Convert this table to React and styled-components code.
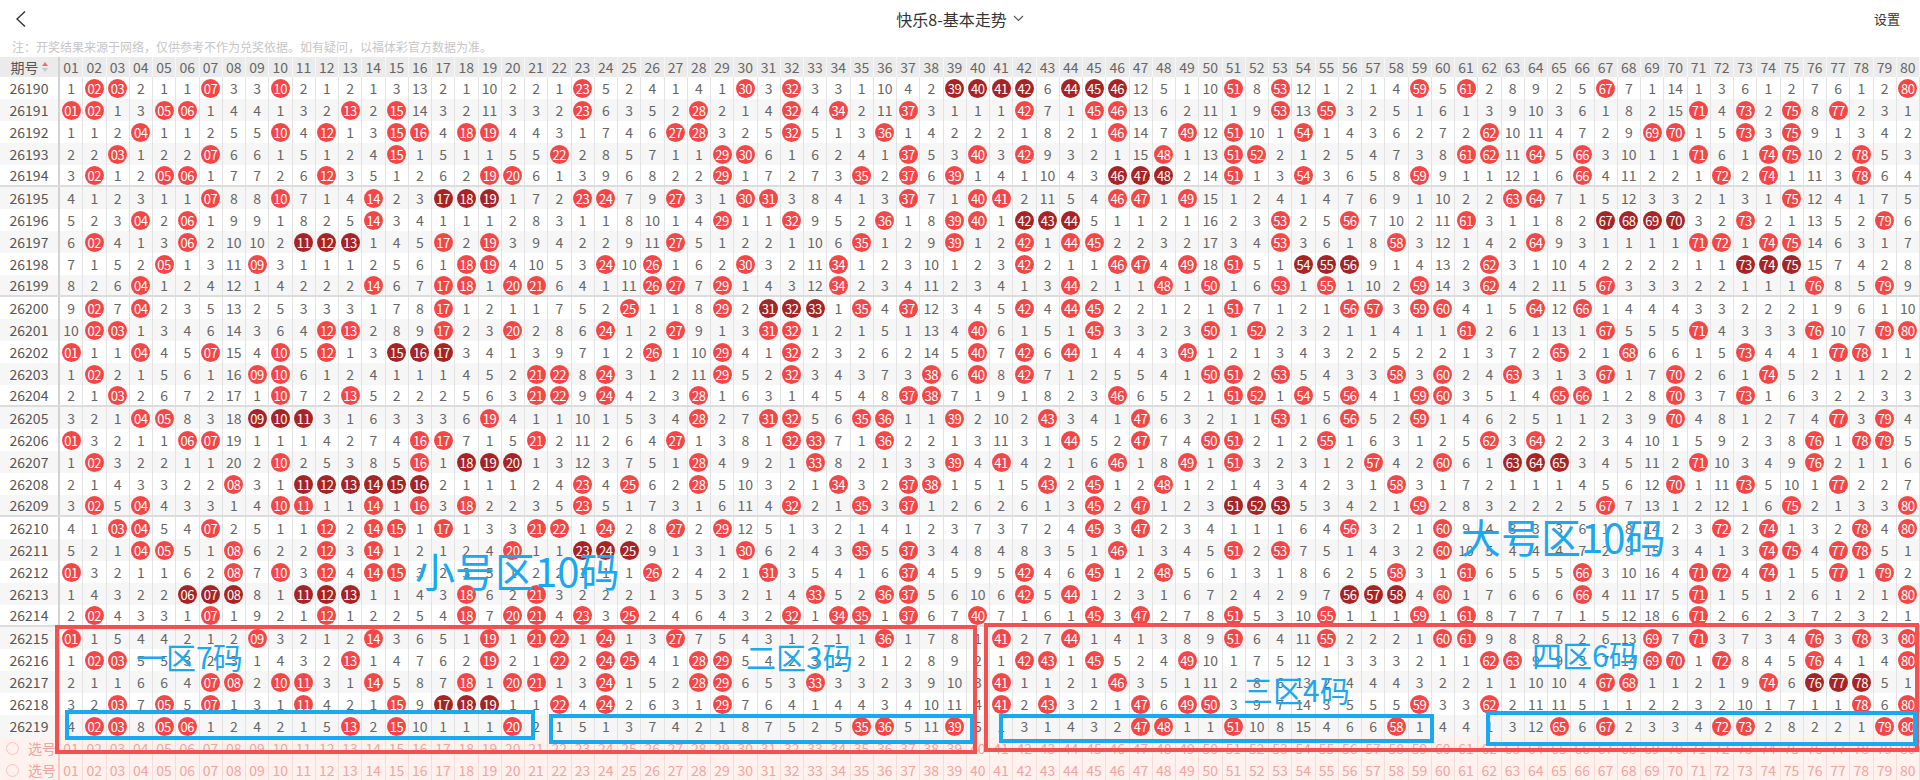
import React from "react";
import styled, { createGlobalStyle } from "styled-components";

const GlobalStyle = createGlobalStyle`
  html, body {
    margin: 0;
    padding: 0;
    background: #fff;
    overflow: hidden;
  }
  body {
    font-family: "Noto Sans CJK SC", "Noto Sans", sans-serif;
  }
`;

// omission shown in the first period for every number not drawn
const START = [
  1, 0, 0, 2, 1, 1, 0, 3, 3, 0,
  2, 1, 2, 1, 3, 13, 2, 1, 10, 2,
  2, 1, 0, 5, 2, 4, 1, 4, 1, 0,
  3, 0, 3, 3, 1, 10, 4, 2, 0, 0,
  0, 0, 6, 0, 0, 0, 12, 5, 1, 10,
  0, 8, 0, 12, 1, 2, 1, 4, 0, 5,
  0, 2, 8, 9, 2, 5, 0, 7, 1, 14,
  1, 3, 6, 1, 2, 7, 6, 1, 2, 0,
];

const DRAWS = [
  [2, 3, 7, 10, 23, 30, 32, 39, 40, 41, 42, 44, 45, 46, 51, 53, 59, 61, 67, 80],
  [1, 2, 5, 6, 13, 15, 23, 28, 32, 34, 37, 42, 45, 46, 53, 55, 71, 73, 75, 77],
  [4, 10, 12, 15, 16, 18, 19, 27, 28, 32, 36, 46, 49, 51, 54, 62, 69, 70, 73, 75],
  [3, 7, 15, 22, 29, 30, 37, 40, 42, 48, 51, 52, 61, 62, 64, 66, 71, 74, 75, 78],
  [2, 5, 6, 12, 19, 20, 29, 35, 37, 39, 46, 47, 48, 51, 54, 59, 66, 72, 74, 78],
  [7, 10, 14, 17, 18, 19, 23, 24, 27, 30, 31, 37, 40, 41, 46, 47, 49, 63, 64, 75],
  [4, 6, 14, 29, 32, 36, 39, 40, 42, 43, 44, 53, 56, 61, 67, 68, 69, 70, 73, 79],
  [2, 6, 11, 12, 13, 17, 19, 27, 35, 39, 42, 44, 45, 53, 58, 64, 71, 72, 74, 75],
  [5, 9, 18, 19, 24, 26, 30, 34, 42, 46, 47, 49, 51, 54, 55, 56, 62, 73, 74, 75],
  [4, 14, 17, 18, 20, 21, 26, 27, 29, 34, 44, 48, 50, 53, 55, 59, 62, 67, 76, 79],
  [2, 4, 17, 25, 29, 31, 32, 33, 35, 37, 42, 44, 45, 51, 56, 57, 59, 60, 64, 66],
  [2, 3, 12, 13, 17, 20, 24, 27, 31, 32, 40, 45, 50, 52, 61, 67, 71, 76, 79, 80],
  [1, 4, 7, 10, 12, 15, 16, 17, 26, 29, 32, 40, 42, 44, 49, 65, 68, 73, 77, 78],
  [2, 9, 10, 21, 22, 24, 29, 32, 38, 40, 42, 50, 51, 53, 58, 60, 63, 67, 70, 74],
  [3, 10, 13, 21, 22, 24, 28, 37, 38, 46, 51, 52, 54, 56, 59, 60, 65, 66, 70, 73],
  [4, 5, 9, 10, 11, 19, 28, 31, 32, 35, 36, 39, 43, 47, 53, 56, 59, 70, 77, 79],
  [1, 6, 7, 16, 17, 21, 27, 32, 33, 36, 44, 47, 50, 51, 55, 62, 64, 76, 78, 79],
  [2, 10, 16, 18, 19, 20, 28, 33, 39, 41, 46, 49, 51, 57, 60, 63, 64, 65, 71, 76],
  [8, 11, 12, 13, 14, 15, 16, 23, 25, 28, 34, 37, 38, 43, 45, 48, 58, 70, 73, 77],
  [2, 4, 10, 11, 14, 16, 18, 23, 32, 35, 37, 45, 47, 51, 52, 53, 59, 67, 75, 80],
  [3, 4, 7, 12, 14, 15, 17, 21, 22, 24, 27, 29, 45, 47, 56, 60, 72, 74, 78, 80],
  [4, 5, 8, 12, 14, 20, 23, 24, 25, 30, 35, 37, 46, 51, 53, 60, 74, 75, 77, 78],
  [1, 8, 10, 12, 14, 15, 26, 31, 37, 42, 45, 48, 58, 61, 66, 71, 72, 74, 77, 79],
  [6, 7, 8, 11, 12, 13, 18, 21, 33, 36, 37, 42, 44, 56, 57, 58, 60, 66, 71, 80],
  [2, 7, 12, 18, 20, 21, 23, 25, 32, 34, 35, 37, 40, 45, 47, 51, 55, 59, 61, 71],
  [1, 9, 14, 19, 21, 22, 24, 27, 36, 41, 44, 51, 55, 60, 61, 69, 71, 76, 78, 80],
  [2, 3, 13, 19, 22, 24, 25, 28, 29, 42, 43, 45, 49, 62, 63, 69, 70, 72, 76, 80],
  [7, 8, 10, 11, 14, 18, 20, 21, 24, 28, 29, 33, 41, 46, 67, 68, 74, 76, 77, 78],
  [3, 5, 7, 11, 15, 17, 18, 19, 22, 24, 29, 41, 43, 47, 49, 50, 59, 62, 78, 80],
  [2, 3, 5, 6, 13, 15, 20, 35, 36, 39, 47, 48, 51, 58, 65, 67, 72, 73, 79, 80],
];

const NUMS = Array.from({ length: 80 }, (_, i) => i + 1);
const pad = (n) => String(n).padStart(2, "0");

// runs of 3+ consecutive numbers get the dark ball
const darkSet = (draw) => {
  const set = new Set(draw);
  const dark = new Set();
  draw.forEach((n) => {
    if (set.has(n - 1)) return;
    let end = n;
    while (set.has(end + 1)) end++;
    if (end - n >= 2) for (let k = n; k <= end; k++) dark.add(k);
  });
  return dark;
};

const buildRows = () => {
  const omit = START.map((v) => v - 1);
  return DRAWS.map((draw, i) => {
    const hits = new Set(draw);
    const dark = darkSet(draw);
    const cells = NUMS.map((n) => {
      if (hits.has(n)) {
        omit[n - 1] = 0;
        return { n, hit: true, dark: dark.has(n) };
      }
      omit[n - 1] += 1;
      return { n, hit: false, value: omit[n - 1] };
    });
    return { period: 26190 + i, cells };
  });
};

const ROWS = buildRows();

const GRID = "60px repeat(80, 23.25px)";

const Page = styled.div`
  position: relative;
  width: 1920px;
  height: 780px;
  overflow: hidden;
  color: #333;
`;

const TopBar = styled.div`
  height: 37px;
  display: grid;
  grid-template-columns: 1fr auto 1fr;
  align-items: center;
`;

const Back = styled.div`
  padding-left: 14px;
  display: flex;
  align-items: center;
  svg {
    width: 14px;
    height: 18px;
  }
`;

const Title = styled.div`
  display: flex;
  align-items: center;
  gap: 6px;
  font-size: 16px;
  color: #333;
  svg {
    width: 11px;
    height: 7px;
  }
`;

const Settings = styled.div`
  justify-self: end;
  padding-right: 20px;
  font-size: 13px;
  color: #333;
`;

const Note = styled.div`
  height: 20px;
  line-height: 20px;
  padding-left: 12px;
  font-size: 12px;
  color: #c6c6c6;
`;

const Row = styled.div`
  display: grid;
  grid-template-columns: ${GRID};
  height: 22px;
  box-sizing: border-box;
  background: ${(p) => p.$bg};
  border-bottom: ${(p) => (p.$split ? "2px solid #dcdcdc" : "none")};
`;

const HeaderRow = styled(Row)`
  height: 20px;
  background: #ebebeb;
`;

const Cell = styled.div`
  display: flex;
  align-items: center;
  justify-content: center;
  font-size: 14px;
  color: #666;
  border-right: 1px solid #e3e3e3;
  line-height: 1;
  white-space: nowrap;
`;

const HeadCell = styled(Cell)`
  border-right-color: #f6f6f6;
  color: #666;
`;

const PeriodCell = styled(Cell)`
  border-right: 2px solid #d2d2d2;
  color: #555;
`;

const SortIcon = styled.span`
  display: inline-flex;
  flex-direction: column;
  gap: 2px;
  margin-left: 3px;
  &::before,
  &::after {
    content: "";
    border-left: 3px solid transparent;
    border-right: 3px solid transparent;
  }
  &::before {
    border-bottom: 4px solid #f26b6b;
  }
  &::after {
    border-top: 4px solid #c8c8c8;
  }
`;

const Ball = styled.span`
  width: 19px;
  height: 19px;
  border-radius: 50%;
  background: ${(p) => (p.$dark ? "#a82424" : "#f54646")};
  color: #fff;
  font-size: 13px;
  display: flex;
  align-items: center;
  justify-content: center;
  letter-spacing: -0.3px;
`;

const PickRow = styled(Row)`
  background: #fff1ee;
`;

const PickCell = styled(Cell)`
  color: #f6a29d;
  border-right-color: #f6dcd8;
`;

const PickLabel = styled(PickCell)`
  justify-content: flex-start;
  gap: 9px;
  padding-left: 6px;
  border-right: 2px solid #f0cfcb;
`;

const Ring = styled.span`
  width: 13px;
  height: 13px;
  border-radius: 50%;
  border: 1px solid #f8c2bd;
  box-sizing: border-box;
`;

const Frame = styled.div`
  position: absolute;
  left: ${(p) => p.$x}px;
  top: ${(p) => p.$y}px;
  width: ${(p) => p.$w}px;
  height: ${(p) => p.$h}px;
  box-sizing: border-box;
  border: 4px solid ${(p) => p.$color};
  pointer-events: none;
`;

const Label = styled.div`
  position: absolute;
  left: ${(p) => p.$x}px;
  top: ${(p) => p.$y}px;
  font-size: ${(p) => p.$size}px;
  line-height: 1;
  font-weight: 400;
  color: #19a8f2;
  white-space: nowrap;
  pointer-events: none;
`;

const RED = "#f55050";
const BLUE = "#19a8f2";

const FRAMES = [
  { x: 55, y: 625, w: 922, h: 129, color: RED },
  { x: 984, y: 623, w: 935, h: 129, color: RED },
  { x: 65, y: 710, w: 470, h: 30, color: BLUE },
  { x: 549, y: 714, w: 425, h: 30, color: BLUE },
  { x: 999, y: 714, w: 435, h: 29, color: BLUE },
  { x: 1486, y: 711, w: 431, h: 35, color: BLUE },
];

const LABELS = [
  { text: "小号区10码", x: 415, y: 550, size: 40 },
  { text: "大号区10码", x: 1461, y: 516, size: 40 },
  { text: "一区7码", x: 136, y: 641, size: 30 },
  { text: "二区3码", x: 746, y: 641, size: 30 },
  { text: "三区4码", x: 1243, y: 674, size: 30 },
  { text: "四区6码", x: 1532, y: 639, size: 30 },
];

export default function App() {
  return (
    <>
      <GlobalStyle />
      <Page>
        <TopBar>
          <Back>
            <svg viewBox="0 0 14 18" fill="none" stroke="#333" strokeWidth="1.4">
              <path d="M11 1.5 L3 9 L11 16.5" />
            </svg>
          </Back>
          <Title>
            快乐8-基本走势
            <svg viewBox="0 0 11 7" fill="none" stroke="#555" strokeWidth="1.2">
              <path d="M1 1 L5.5 5.5 L10 1" />
            </svg>
          </Title>
          <Settings>设置</Settings>
        </TopBar>
        <Note>注：开奖结果来源于网络，仅供参考不作为兑奖依据。如有疑问，以福体彩官方数据为准。</Note>

        <HeaderRow>
          <PeriodCell>
            期号
            <SortIcon />
          </PeriodCell>
          {NUMS.map((n) => (
            <HeadCell key={n}>{pad(n)}</HeadCell>
          ))}
        </HeaderRow>

        {ROWS.map((row, i) => (
          <Row
            key={row.period}
            $bg={i % 2 ? "#f6f6f6" : "#fff"}
            $split={i % 5 === 4 && i < ROWS.length - 1}
          >
            <PeriodCell>{row.period}</PeriodCell>
            {row.cells.map((c) => (
              <Cell key={c.n}>
                {c.hit ? <Ball $dark={c.dark}>{pad(c.n)}</Ball> : c.value}
              </Cell>
            ))}
          </Row>
        ))}

        {[0, 1].map((k) => (
          <PickRow key={k}>
            <PickLabel>
              <Ring />
              选号
            </PickLabel>
            {NUMS.map((n) => (
              <PickCell key={n}>{pad(n)}</PickCell>
            ))}
          </PickRow>
        ))}

        {FRAMES.map((f, i) => (
          <Frame key={i} $x={f.x} $y={f.y} $w={f.w} $h={f.h} $color={f.color} />
        ))}
        {LABELS.map((l) => (
          <Label key={l.text} $x={l.x} $y={l.y} $size={l.size}>
            {l.text}
          </Label>
        ))}
      </Page>
    </>
  );
}
